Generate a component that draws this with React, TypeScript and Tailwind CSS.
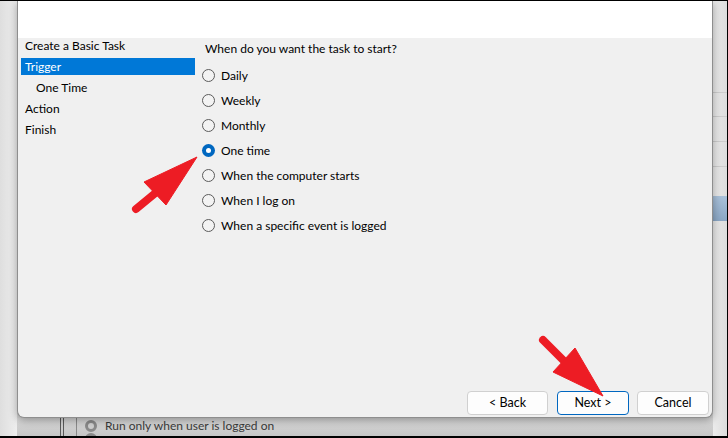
import React from "react";

const NAV = [
  { label: "Create a Basic Task", active: false, indent: false },
  { label: "Trigger", active: true, indent: false },
  { label: "One Time", active: false, indent: true },
  { label: "Action", active: false, indent: false },
  { label: "Finish", active: false, indent: false },
];

const OPTIONS = [
  "Daily",
  "Weekly",
  "Monthly",
  "One time",
  "When the computer starts",
  "When I log on",
  "When a specific event is logged",
];

function Radio({ checked }: { checked: boolean }) {
  if (checked) {
    return (
      <span className="w-[13px] h-[13px] rounded-full bg-[#0067c0] flex items-center justify-center shrink-0">
        <span className="w-[5px] h-[5px] rounded-full bg-white" />
      </span>
    );
  }
  return <span className="w-[13px] h-[13px] rounded-full border border-[#5b5b5b] bg-[#f3f3f3] shrink-0" />;
}

function Button({ label, primary }: { label: string; primary?: boolean }) {
  return (
    <button
      className={`w-full h-[24px] rounded-[4px] bg-[#fdfdfd] text-[12.5px] text-black leading-none flex items-center justify-center ${
        primary ? "border border-[#0067c0]" : "border border-[#d0d0d0]"
      }`}
    >
      {label}
    </button>
  );
}

export default function App() {
  return (
    <div
      className="relative w-[728px] h-[438px] overflow-hidden flex border-t border-r border-b-2 border-black bg-[#d4d4d4]"
      style={{ fontFamily: "Lato, 'Noto Sans', sans-serif" }}
    >
      {/* left sliver of the window behind */}
      <div className="w-[17px] shrink-0 bg-gradient-to-r from-[#dedede] to-[#eeeeee]" />

      {/* center column: dialog + bit of the window behind */}
      <div className="w-[696px] shrink-0 flex flex-col">
        <div className="h-[417px] shrink-0 flex flex-col border-l border-r border-b border-[#8e8e8e] rounded-b-[7px] overflow-hidden shadow-[0_2px_8px_rgba(0,0,0,0.35)] bg-[#f0f0f0] relative z-10">
          <div className="h-[37px] shrink-0 bg-white" />
          <div className="flex-1 flex flex-col">
            <div className="flex-1 flex">
              {/* nav */}
              <div className="w-[174px] ml-[3px] -mt-px flex flex-col gap-[4px] text-[12px] text-black">
                {NAV.map((n) => (
                  <div
                    key={n.label}
                    className={`h-[17px] leading-[17px] ${n.indent ? "pl-[15px]" : "pl-[4px]"} ${
                      n.active ? "bg-[#0078d7] text-white" : ""
                    }`}
                  >
                    {n.label}
                  </div>
                ))}
              </div>
              {/* content */}
              <div className="ml-[7px] pt-[2px] flex flex-col text-[12px] text-black">
                <div className="h-[17px] leading-[17px] pl-[3px]">When do you want the task to start?</div>
                <div className="mt-[6px] flex flex-col">
                  {OPTIONS.map((o) => (
                    <div key={o} className="h-[25px] flex items-center gap-[6px]">
                      <Radio checked={o === "One time"} />
                      <span>{o}</span>
                    </div>
                  ))}
                </div>
              </div>
            </div>
            <div className="flex justify-end pr-[3px] pb-[2px]">
              <div className="w-[81px]">
                <Button label="< Back" />
              </div>
              <div className="w-[72px] ml-[9px]">
                <Button label="Next >" primary />
              </div>
              <div className="w-[72px] ml-[8px]">
                <Button label="Cancel" />
              </div>
            </div>
          </div>
        </div>

        {/* window behind, below the dialog */}
        <div className="flex-1 relative overflow-hidden bg-gradient-to-b from-[#d8d8d8] to-[#c6c6c6] flex">
          <div className="w-[43px] shrink-0" />
          <div className="w-[4px] shrink-0 border-l border-r border-[#5a5a5a]" />
          <div className="w-[12px] shrink-0" />
          <div className="w-px shrink-0 bg-[#8a8a8a]" />
          <div className="flex flex-col ml-[8px] text-[12px] text-[#3a3a3a]">
            <div className="h-[15px] leading-[15px] flex items-center gap-[8px]">
              <span className="w-[12px] h-[12px] rounded-full border-[3px] border-[#8a8a8a]" />
              <span>Run only when user is logged on</span>
            </div>
            <div className="h-[15px] flex items-center gap-[8px]">
              <span className="w-[12px] h-[12px] rounded-full border-[3px] border-[#8a8a8a]" />
            </div>
          </div>
        </div>
      </div>

      {/* right sliver of the window behind */}
      <div className="w-[14px] shrink-0 flex flex-col bg-gradient-to-r from-[#ececec] to-[#dcdcdc]">
        <div className="h-[91px] shrink-0" />
        <div className="h-px shrink-0 bg-[#cdcdcd]" />
        <div className="h-[23px] shrink-0" />
        <div className="h-px shrink-0 bg-[#cdcdcd]" />
        <div className="h-[24px] shrink-0" />
        <div className="h-px shrink-0 bg-[#cdcdcd]" />
        <div className="h-[24px] shrink-0" />
        <div className="h-px shrink-0 bg-[#cdcdcd]" />
        <div className="h-[29px] shrink-0" />
        <div className="h-[25px] shrink-0 bg-gradient-to-b from-[#a9c1da] to-[#8aa6c4]" />
        <div className="flex-1" />
      </div>

      {/* red callout arrows */}
      <svg className="absolute inset-0 pointer-events-none z-20" width="728" height="438" viewBox="0 0 728 438">
        <g fill="#ed1c24" stroke="#ed1c24">
          <line x1="136" y1="208" x2="170" y2="180" strokeWidth="8" strokeLinecap="round" />
          <polygon points="197,156 144,181 166,204" strokeWidth="1" strokeLinejoin="round" />
          <line x1="543" y1="339" x2="568" y2="364" strokeWidth="8" strokeLinecap="round" />
          <polygon points="603,395 553,371 575,347" strokeWidth="1" strokeLinejoin="round" />
        </g>
      </svg>
    </div>
  );
}
